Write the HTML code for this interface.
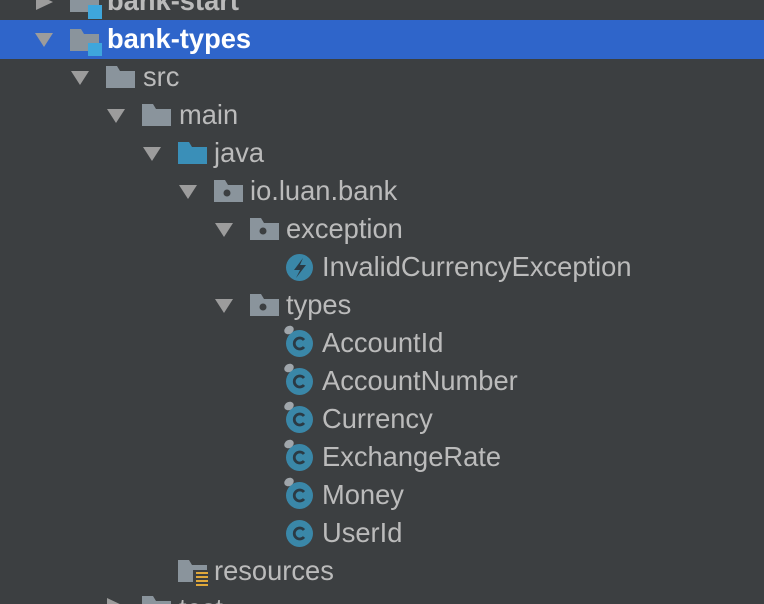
<!DOCTYPE html>
<html><head><style>
html,body{margin:0;width:764px;height:604px;overflow:hidden;}
body{background:#3c3f41;position:relative;font-family:"Liberation Sans",sans-serif;}
.sel{position:absolute;left:0;top:20px;width:764px;height:39px;background:#2f65ca;}
.t{position:absolute;font-size:27.3px;color:#bbbbbb;line-height:38px;white-space:nowrap;}
svg{position:absolute;}
</style></head><body>
<div class="sel"></div>
<svg width="764" height="604" style="left:0;top:0">
<defs>
<g id="down"><polygon points="0,0 18,0 9,14" fill="#9c9c9c"/></g>
<g id="fold"><path d="M0,0 H11 L14,5 H29 V22 H0Z" fill="#8a949c"/></g>
<g id="pkg"><path d="M0,0 H11 L14,5 H29 V22 H0Z" fill="#8a949c"/><circle cx="13" cy="13" r="3.5" fill="#3c3f41"/></g>
<g id="cls"><circle cx="13.5" cy="13.5" r="13.5" fill="#3a87a8"/><path d="M18,10 A5.5,5.5 0 1 0 18,17" stroke="#2b3a44" stroke-width="2.8" fill="none"/></g>
<g id="ov"><ellipse cx="6" cy="4" rx="5" ry="4" fill="#a0a6ab" transform="rotate(-30 6 4)"/></g>
</defs>
<polygon points="36,-6 53,2 36,10" fill="#9c9c9c"/>
<use href="#fold" x="70" y="-10"/><rect x="88" y="5" width="14" height="14" fill="#3ea6dc"/>
<use href="#down" x="35" y="33"/>
<use href="#fold" x="70" y="29"/><rect x="88" y="43" width="14" height="13" fill="#3ea6dc"/>
<use href="#down" x="71" y="71"/><use href="#fold" x="106" y="66"/>
<use href="#down" x="107" y="109"/><use href="#fold" x="142" y="104"/>
<use href="#down" x="143" y="147"/><path d="M178,142 H189 L192,147 H207 V164 H178Z" fill="#3a8fb8"/>
<use href="#down" x="179" y="185"/><use href="#pkg" x="214" y="180"/>
<use href="#down" x="215" y="223"/><use href="#pkg" x="250" y="218"/>
<circle cx="299.5" cy="267.5" r="13.5" fill="#3a87a8"/><path d="M303,258 L294,270 H300 L296,278 L306,265 H300Z" fill="#2b3a44"/>
<use href="#down" x="215" y="299"/><use href="#pkg" x="250" y="294"/>
<use href="#cls" x="286" y="330"/><use href="#ov" x="283" y="326"/>
<use href="#cls" x="286" y="368"/><use href="#ov" x="283" y="364"/>
<use href="#cls" x="286" y="406"/><use href="#ov" x="283" y="402"/>
<use href="#cls" x="286" y="444"/><use href="#ov" x="283" y="440"/>
<use href="#cls" x="286" y="482"/><use href="#ov" x="283" y="478"/>
<use href="#cls" x="286" y="520"/>
<path d="M178,560 H189 L192,565 H207 V582 H178Z" fill="#8a949c"/>
<rect x="193" y="570" width="16" height="16" fill="#3c3f41"/>
<g fill="#e0a83a"><rect x="196" y="572" width="12" height="2"/><rect x="196" y="576" width="12" height="2"/><rect x="196" y="580" width="12" height="2"/><rect x="196" y="584" width="12" height="2"/></g>
<polygon points="107,598 124,606 107,614" fill="#9c9c9c"/>
<use href="#fold" x="142" y="596"/>
</svg>
<div class="t" style="left:107px;top:-18px;font-weight:bold">bank-start</div>
<div class="t" style="left:107px;top:20px;font-weight:bold;color:#fff">bank-types</div>
<div class="t" style="left:143px;top:58px">src</div>
<div class="t" style="left:179px;top:96px">main</div>
<div class="t" style="left:214px;top:134px">java</div>
<div class="t" style="left:250px;top:172px">io.luan.bank</div>
<div class="t" style="left:286px;top:210px">exception</div>
<div class="t" style="left:322px;top:248px">InvalidCurrencyException</div>
<div class="t" style="left:286px;top:286px">types</div>
<div class="t" style="left:322px;top:324px">AccountId</div>
<div class="t" style="left:322px;top:362px">AccountNumber</div>
<div class="t" style="left:322px;top:400px">Currency</div>
<div class="t" style="left:322px;top:438px">ExchangeRate</div>
<div class="t" style="left:322px;top:476px">Money</div>
<div class="t" style="left:322px;top:514px">UserId</div>
<div class="t" style="left:214px;top:552px">resources</div>
<div class="t" style="left:179px;top:590px">test</div>
</body></html>
